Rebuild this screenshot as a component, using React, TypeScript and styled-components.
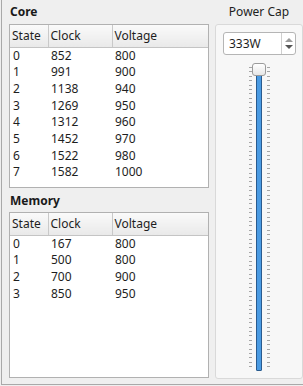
import React from 'react';
import styled, { createGlobalStyle } from 'styled-components';

type Row = { state: number; clock: number; voltage: number };

const coreStates: Row[] = [
	{ state: 0, clock: 852, voltage: 800 },
	{ state: 1, clock: 991, voltage: 900 },
	{ state: 2, clock: 1138, voltage: 940 },
	{ state: 3, clock: 1269, voltage: 950 },
	{ state: 4, clock: 1312, voltage: 960 },
	{ state: 5, clock: 1452, voltage: 970 },
	{ state: 6, clock: 1522, voltage: 980 },
	{ state: 7, clock: 1582, voltage: 1000 },
];

const memoryStates: Row[] = [
	{ state: 0, clock: 167, voltage: 800 },
	{ state: 1, clock: 500, voltage: 800 },
	{ state: 2, clock: 700, voltage: 900 },
	{ state: 3, clock: 850, voltage: 950 },
];

const GlobalStyle = createGlobalStyle`
	html, body {
		margin: 0;
		padding: 0;
		background: #efefef;
	}
	body {
		font-family: 'Noto Sans', 'Open Sans', sans-serif;
		font-size: 12px;
		color: #1e1e1e;
	}
`;

const StateTable: React.FC<{ rows: Row[]; height: number }> = ({
	rows,
	height,
}) => {
	return (
		<TableBox $height={height}>
			<Table>
				<thead>
					<tr>
						<HeadCell $width={38}>State</HeadCell>
						<HeadCell $width={64}>Clock</HeadCell>
						<HeadCell>Voltage</HeadCell>
					</tr>
				</thead>
				<tbody>
					{rows.map((r) => (
						<tr key={r.state}>
							<Cell>{r.state}</Cell>
							<Cell>{r.clock}</Cell>
							<Cell>{r.voltage}</Cell>
						</tr>
					))}
				</tbody>
			</Table>
		</TableBox>
	);
};

const Ticks: React.FC = () => {
	const ticks = [];
	const top = 4;
	const count = 68;
	const step = 4.4;
	for (let i = 0; i <= count; i++) {
		const y = Math.round(top + i * step) + 0.5;
		ticks.push(<line key={`l${i}`} x1={0} x2={3} y1={y} y2={y} />);
		ticks.push(<line key={`r${i}`} x1={18} x2={21} y1={y} y2={y} />);
	}
	return (
		<TickSvg width={21} height={306} stroke="#a6a6a6" strokeWidth={1}>
			{ticks}
		</TickSvg>
	);
};

export default function App() {
	return (
		<>
			<GlobalStyle />
			<Frame>
				<LeftColumn>
					<SectionTitle>Core</SectionTitle>
					<StateTable rows={coreStates} height={164} />
					<SectionTitle $top={1}>Memory</SectionTitle>
					<StateTable rows={memoryStates} height={166} />
				</LeftColumn>
				<RightColumn>
					<CapTitle>Power Cap</CapTitle>
					<CapGroup>
						<SpinBox>
							<SpinValue>333W</SpinValue>
							<SpinButtons>
								<Arrow $up />
								<Arrow />
							</SpinButtons>
						</SpinBox>
						<SliderArea>
							<Ticks />
							<Groove />
							<Handle />
						</SliderArea>
					</CapGroup>
				</RightColumn>
			</Frame>
		</>
	);
}

const Frame = styled.div`
	display: flex;
	box-sizing: border-box;
	height: 385px;
	margin-left: 1px;
	padding-left: 7px;
	border-left: 1px solid #a9a9a9;
	border-bottom: 1px solid #a9a9a9;
`;

const LeftColumn = styled.div`
	display: flex;
	flex-direction: column;
	width: 200px;
`;

const SectionTitle = styled.div<{ $top?: number }>`
	height: 24px;
	padding-top: ${(p) => p.$top ?? 0}px;
	box-sizing: border-box;
	padding-left: 1px;
	font-weight: bold;
	font-size: 12px;
	line-height: 23px;
	color: #1a1a1a;
`;

const TableBox = styled.div<{ $height: number }>`
	box-sizing: border-box;
	height: ${(p) => p.$height}px;
	background: #ffffff;
	border: 1px solid #b1b1b1;
	overflow: hidden;
`;

const Table = styled.table`
	width: 100%;
	border-collapse: collapse;
	table-layout: fixed;
`;

const HeadCell = styled.th<{ $width?: number }>`
	width: ${(p) => (p.$width ? `${p.$width}px` : 'auto')};
	height: 22px;
	padding: 0 0 0 2px;
	text-align: left;
	font-weight: normal;
	color: #1e1e1e;
	background: linear-gradient(#fafafa, #e9e9e9);
	border-bottom: 1px solid #c4c4c4;
	border-right: 1px solid #c9c9c9;
	box-sizing: border-box;

	&:last-child {
		border-right: none;
	}
`;

const Cell = styled.td`
	height: 16.7px;
	padding: 0 0 0 3px;
	line-height: 16.7px;
	white-space: nowrap;
	vertical-align: bottom;
`;

const RightColumn = styled.div`
	display: flex;
	flex-direction: column;
	width: 88px;
	margin-left: 6px;
`;

const CapTitle = styled.div`
	height: 24px;
	text-align: center;
	line-height: 23px;
	color: #1e1e1e;
`;

const CapGroup = styled.div`
	box-sizing: border-box;
	height: 355px;
	display: flex;
	flex-direction: column;
	align-items: center;
	padding-top: 7px;
	background: #f7f7f7;
	border: 1px solid #d9d9d9;
	border-radius: 3px;
`;

const SpinBox = styled.div`
	box-sizing: border-box;
	display: flex;
	width: 73px;
	height: 23px;
	margin-left: 1px;
	background: #ffffff;
	border: 1px solid #b5b5b5;
	border-radius: 3px;
`;

const SpinValue = styled.div`
	flex: 1;
	padding-left: 5px;
	line-height: 21px;
	color: #1e1e1e;
`;

const SpinButtons = styled.div`
	display: flex;
	flex-direction: column;
	justify-content: center;
	align-items: center;
	gap: 3px;
	width: 13px;
	border-left: 1px solid #cfcfcf;
`;

const Arrow = styled.div<{ $up?: boolean }>`
	width: 0;
	height: 0;
	border-left: 4px solid transparent;
	border-right: 4px solid transparent;
	${(p) =>
		p.$up
			? 'border-bottom: 4px solid #9a9a9a;'
			: 'border-top: 4px solid #555555;'}
`;

const SliderArea = styled.div`
	position: relative;
	margin-top: 8px;
	width: 21px;
	height: 309px;
	margin-left: 1px;
`;

const TickSvg = styled.svg`
	position: absolute;
	left: 0;
	top: 0;
	display: block;
`;

const Groove = styled.div`
	position: absolute;
	left: 7px;
	top: 3px;
	box-sizing: border-box;
	width: 6px;
	height: 305px;
	background: #4a9be3;
	border: 1px solid #2a5b8e;
	border-radius: 1px;
`;

const Handle = styled.div`
	position: absolute;
	left: 3px;
	top: 0;
	box-sizing: border-box;
	width: 14px;
	height: 13px;
	background: linear-gradient(#ffffff, #e6e6e6);
	border: 1px solid #9b9b9b;
	border-radius: 3px;
`;
